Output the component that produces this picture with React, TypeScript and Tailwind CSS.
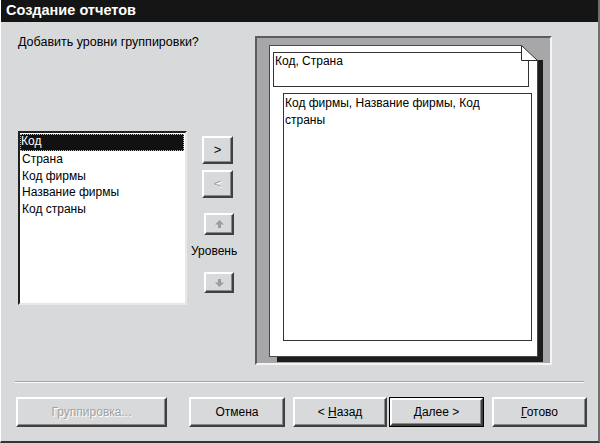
import React from 'react';

const bevel =
  'border-2 border-t-white border-l-white border-b-[#404040] border-r-[#404040] shadow-[inset_-1px_-1px_0_#8a8a8a] bg-[#d8d9db]';

const ArrowIcon: React.FC<{ down?: boolean }> = ({ down }) => (
  <svg width="9" height="8" viewBox="0 0 9 8" className={down ? 'rotate-180' : ''}>
    <path d="M4.5 0 L9 4.5 L6 4.5 L6 8 L3 8 L3 4.5 L0 4.5 Z" fill="#9c9c9c" />
  </svg>
);

const fields = ['Код', 'Страна', 'Код фирмы', 'Название фирмы', 'Код страны'];

export default function App() {
  return (
    <div
      className="w-[600px] h-[443px] bg-[#d8d9db] flex flex-col border-l border-l-white border-r-2 border-r-[#6f6f6f] border-b-2 border-b-[#353535] text-[12px] text-black overflow-hidden"
      style={{ fontFamily: '"Liberation Sans", Arial, sans-serif' }}
    >
      {/* title bar */}
      <div className="h-[22px] bg-[#151515] text-white font-bold text-[14.5px] pl-[5px] flex items-center shrink-0">
        Создание отчетов
      </div>

      <div className="flex pl-[17px] pt-[14px]">
        {/* left: question + available fields */}
        <div className="w-[169px] flex flex-col">
          <div className="leading-[16px] mt-[-2px] text-[12.5px] whitespace-nowrap">Добавить уровни группировки?</div>
          <div className="mt-[81px] h-[174px] bg-white border-2 border-t-[#202020] border-l-[#202020] border-b-[#e8e8e8] border-r-[#e8e8e8] pt-[1px] pr-[1px]">
            {fields.map((f, i) => (
              <div
                key={f}
                className={
                  i === 0
                    ? 'h-[16.75px] leading-[15px] pl-[1px] bg-[#111] text-white outline-1 outline-dotted outline-[#bbb] -outline-offset-1'
                    : 'h-[16.75px] leading-[16.75px] pl-[2px]'
                }
              >
                {f}
              </div>
            ))}
          </div>
        </div>

        {/* middle: move buttons */}
        <div className="w-[68px] flex flex-col items-start">
          <button className={`${bevel} mt-[100px] ml-[15px] w-[31px] h-[28px] flex items-center justify-center text-[13px]`}>
            &gt;
          </button>
          <button
            className={`${bevel} mt-[6px] ml-[15px] w-[31px] h-[28px] flex items-center justify-center text-[13px] text-[#a0a0a0] [text-shadow:1px_1px_0_#fff]`}
          >
            &lt;
          </button>
          <button className={`${bevel} mt-[15px] ml-[17px] w-[30px] h-[22px] flex items-center justify-center`}>
            <ArrowIcon />
          </button>
          <div className="mt-[8px] ml-[4px] leading-[16px] text-[12px]">Уровень</div>
          <button className={`${bevel} mt-[13px] ml-[17px] w-[30px] h-[21px] flex items-center justify-center`}>
            <ArrowIcon down />
          </button>
        </div>

        {/* right: report preview */}
        <div className="w-[297px] h-[329px] bg-[#a7a7a9] border-2 border-t-[#5c5c5c] border-l-[#5c5c5c] border-b-[#f4f4f4] border-r-[#f4f4f4] pl-[12px] pt-[7px]">
          <div className="relative w-[269px] h-[312px] bg-white border border-[#4a4a4a]">
            {/* page shadow */}
            <div className="absolute top-[14px] -right-[6px] w-[5px] h-[302px] bg-[#1d1d1d]" />
            <div className="absolute left-[7px] -bottom-[6px] w-[266px] h-[5px] bg-[#1d1d1d]" />
            <svg width="17" height="16" viewBox="0 0 17 16" className="absolute -top-px -right-px">
              <path d="M0 0 L17 0 L17 16 Z" fill="#a7a7a9" />
              <path d="M0.5 0.5 L16.5 15.5 L0.5 15.5 Z" fill="#fff" stroke="#2a2a2a" />
            </svg>
            <div className="ml-[3px] mt-[6px] w-[256px] h-[35px] border border-[#333] px-[1px] leading-[16px]">
              Код, Страна
            </div>
            <div className="ml-[13px] mt-[6px] w-[249px] h-[248px] border border-[#333] px-[1px] pt-px leading-[17px]">
              Код фирмы, Название фирмы, Код
              <br />
              страны
            </div>
          </div>
        </div>
      </div>

      {/* separator */}
      <div className="ml-[14px] mt-[16px] w-[569px] border-t border-t-[#a4a4a4] border-b border-b-white" />

      {/* bottom buttons */}
      <div className="flex pl-[15px] mt-[14px]">
        <button className={`${bevel} w-[151px] h-[30px] text-[#a2a2a2] [text-shadow:1px_1px_0_#fff]`}>
          Группировка...
        </button>
        <button className={`${bevel} ml-[22px] w-[96px] h-[30px]`}>Отмена</button>
        <button className={`${bevel} ml-[8px] w-[94px] h-[30px]`}>
          &lt; <span className="underline">Н</span>азад
        </button>
        <button className="ml-[2px] w-[95px] h-[30px] border border-black">
          <span className={`${bevel} w-full h-full flex items-center justify-center`}>
            <span className="underline">Д</span>алее &gt;
          </span>
        </button>
        <button className={`${bevel} ml-[8px] w-[95px] h-[30px]`}>
          <span className="underline">Г</span>отово
        </button>
      </div>
    </div>
  );
}
